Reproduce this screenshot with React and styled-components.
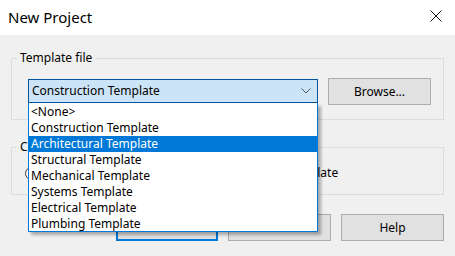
import styled, { createGlobalStyle } from 'styled-components';

const templates = [
  '<None>',
  'Construction Template',
  'Architectural Template',
  'Structural Template',
  'Mechanical Template',
  'Systems Template',
  'Electrical Template',
  'Plumbing Template',
];

const GlobalStyle = createGlobalStyle`
  html, body {
    margin: 0;
    padding: 0;
    background: #f0f0f0;
  }
  body {
    font-family: 'Noto Sans', 'Open Sans', sans-serif;
    font-size: 12px;
    color: #000;
  }
  * {
    box-sizing: border-box;
  }
`;

function App() {
  return (
    <>
      <GlobalStyle />
      <Window>
        <TitleBar>
          <Title>New Project</Title>
          <CloseButton>
            <svg width="12" height="12" viewBox="0 0 12 12">
              <path d="M0.5 0.5 L11.5 11.5 M11.5 0.5 L0.5 11.5" stroke="#111" strokeWidth="1" fill="none" />
            </svg>
          </CloseButton>
        </TitleBar>
        <Body>
          <GroupBox height={62} top={23}>
            <Legend>Template file</Legend>
            <TemplateRow>
              <ComboWrap>
                <Combo>
                  <ComboText>Construction Template</ComboText>
                  <svg width="10" height="6" viewBox="0 0 10 6">
                    <path d="M0.5 0.5 L5 5 L9.5 0.5" stroke="#555" strokeWidth="1" fill="none" />
                  </svg>
                </Combo>
                <DropList>
                  {templates.map((name) => (
                    <DropItem key={name} selected={name === 'Architectural Template'}>
                      {name}
                    </DropItem>
                  ))}
                </DropList>
              </ComboWrap>
              <Button>Browse...</Button>
            </TemplateRow>
          </GroupBox>
          <GroupBox height={48} top={27}>
            <Legend>Create new</Legend>
            <RadioRow>
              <Radio checked>
                <RadioDot checked />
                Project
              </Radio>
              <Radio>
                <RadioDot />
                Project template
              </Radio>
            </RadioRow>
          </GroupBox>
          <ButtonRow>
            <Button focused>OK</Button>
            <Button>Cancel</Button>
            <Button>Help</Button>
          </ButtonRow>
        </Body>
      </Window>
    </>
  );
}

export default App;

const Window = styled.div`
  width: 455px;
  height: 256px;
  display: flex;
  flex-direction: column;
  overflow: hidden;
`;

const TitleBar = styled.div`
  height: 35px;
  background: #fff;
  display: flex;
  align-items: center;
  justify-content: space-between;
  padding: 0 13px 0 8px;
`;

const Title = styled.span`
  font-size: 15px;
  color: #000;
  margin-top: -2px;
`;

const CloseButton = styled.div`
  width: 12px;
  height: 12px;
  display: flex;
  margin-top: -3px;
`;

const Body = styled.div`
  flex: 1;
  background: #f0f0f0;
  padding: 0 11px 0 11px;
  display: flex;
  flex-direction: column;
`;

const GroupBox = styled.fieldset`
  position: relative;
  margin: ${(props) => props.top}px 0 0;
  height: ${(props) => props.height}px;
  flex-shrink: 0;
  border: 1px solid #dcdcdc;
  padding: 0;
`;

const Legend = styled.legend`
  position: absolute;
  top: -9px;
  left: 5px;
  padding: 0 3px;
  line-height: 16px;
  background: #f0f0f0;
`;

const TemplateRow = styled.div`
  display: flex;
  align-items: flex-start;
  gap: 10px;
  padding: 19px 0 0 16px;
`;

const ComboWrap = styled.div`
  position: relative;
  width: 290px;
  z-index: 2;
`;

const Combo = styled.div`
  height: 24px;
  margin-top: 1px;
  border: 1px solid #005499;
  background: #cce4f7;
  display: flex;
  align-items: center;
  justify-content: space-between;
  padding: 0 6px 0 3px;
`;

const ComboText = styled.span`
  line-height: 16px;
`;

const DropList = styled.div`
  position: absolute;
  top: 25px;
  left: 0;
  width: 290px;
  height: 129px;
  padding-top: 1px;
  background: #fff;
  border: 1px solid #0078d7;
  border-top: none;
  box-shadow: 3px 3px 3px rgba(0, 0, 0, 0.3);
`;

const DropItem = styled.div`
  height: 16px;
  line-height: 16px;
  padding-left: 2px;
  background: ${(props) => (props.selected ? '#0078d7' : 'transparent')};
  color: ${(props) => (props.selected ? '#fff' : '#000')};
  white-space: nowrap;
`;

const Button = styled.div`
  width: ${(props) => (props.focused ? '102px' : '103px')};
  height: 27px;
  background: #e1e1e1;
  border: ${(props) => (props.focused ? '2px solid #0078d7' : '1px solid #adadad')};
  display: flex;
  align-items: center;
  justify-content: center;
  flex-shrink: 0;
`;

const RadioRow = styled.div`
  display: flex;
  padding: 17px 0 0 13px;
`;

const Radio = styled.label`
  display: flex;
  align-items: center;
  gap: 4px;
  line-height: 16px;
  &:nth-child(2) {
    margin-left: 147px;
  }
`;

const RadioDot = styled.span`
  width: 13px;
  height: 13px;
  border-radius: 50%;
  border: 1px solid #333;
  background: #fff;
  position: relative;
  &::after {
    content: '';
    display: ${(props) => (props.checked ? 'block' : 'none')};
    position: absolute;
    top: 2px;
    left: 2px;
    width: 7px;
    height: 7px;
    border-radius: 50%;
    background: #333;
  }
`;

const ButtonRow = styled.div`
  display: flex;
  justify-content: flex-end;
  align-items: flex-start;
  gap: 10px;
  margin-top: 19px;
`;
